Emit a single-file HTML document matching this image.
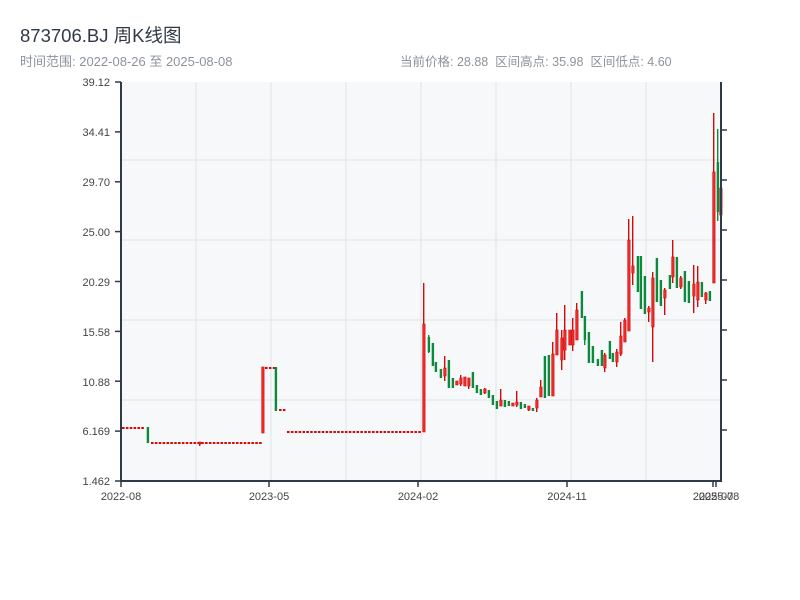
<!DOCTYPE html>
<html><head><meta charset="utf-8"><style>
body{margin:0;background:#fff;width:800px;height:600px;overflow:hidden;font-family:"Liberation Sans","Noto Sans CJK SC",sans-serif}
.t{position:absolute;left:20px;top:22px;font-size:18.5px;color:#2f3a48}
.s{position:absolute;top:51px;font-size:12.5px;color:#8c939b}
</style></head><body>
<div class="t">873706.BJ 周K线图</div>
<div class="s" style="left:20px;font-size:13px">时间范围: 2022-08-26 至 2025-08-08</div>
<div class="s" style="left:400px">当前价格: 28.88&nbsp;&nbsp;区间高点: 35.98&nbsp;&nbsp;区间低点: 4.60</div>
<svg id="c" width="800" height="600" style="position:absolute;left:0;top:0" font-family="Liberation Sans, sans-serif" font-size="11" fill="#444">
<rect x="121" y="82" width="600" height="399" fill="#f6f8fa"/>
<g stroke="#e0e3e8" stroke-width="1">
<line x1="196" y1="82" x2="196" y2="481"/><line x1="271" y1="82" x2="271" y2="481"/><line x1="346" y1="82" x2="346" y2="481"/><line x1="421" y1="82" x2="421" y2="481"/><line x1="496" y1="82" x2="496" y2="481"/><line x1="571" y1="82" x2="571" y2="481"/><line x1="646" y1="82" x2="646" y2="481"/>
<line x1="121" y1="160" x2="721" y2="160"/><line x1="121" y1="240" x2="721" y2="240"/><line x1="121" y1="320" x2="721" y2="320"/><line x1="121" y1="400" x2="721" y2="400"/>
</g>
<g id="k"></g>
<g stroke="#2f3a48" stroke-width="2" fill="none">
<line x1="121" y1="82" x2="121" y2="482"/><line x1="120" y1="481" x2="721" y2="481"/><line x1="721" y1="82" x2="721" y2="482"/>
</g>
<g stroke="#2f3a48" stroke-width="1.5">
<line x1="115" y1="82" x2="121" y2="82"/><line x1="115" y1="131.9" x2="121" y2="131.9"/><line x1="115" y1="181.8" x2="121" y2="181.8"/><line x1="115" y1="231.6" x2="121" y2="231.6"/><line x1="115" y1="281.5" x2="121" y2="281.5"/><line x1="115" y1="331.4" x2="121" y2="331.4"/><line x1="115" y1="381.2" x2="121" y2="381.2"/><line x1="115" y1="431.1" x2="121" y2="431.1"/><line x1="115" y1="481" x2="121" y2="481"/>
<line x1="721" y1="130" x2="727" y2="130"/><line x1="721" y1="180" x2="727" y2="180"/><line x1="721" y1="230" x2="727" y2="230"/><line x1="721" y1="280" x2="727" y2="280"/><line x1="721" y1="330" x2="727" y2="330"/><line x1="721" y1="380" x2="727" y2="380"/><line x1="721" y1="430" x2="727" y2="430"/>
<line x1="121" y1="481" x2="121" y2="487"/><line x1="269" y1="481" x2="269" y2="487"/><line x1="418" y1="481" x2="418" y2="487"/><line x1="567" y1="481" x2="567" y2="487"/><line x1="713" y1="481" x2="713" y2="487"/><line x1="716" y1="481" x2="716" y2="487"/>
</g>
<g text-anchor="end">
<text x="110" y="86">39.12</text><text x="110" y="136">34.41</text><text x="110" y="186">29.70</text><text x="110" y="236">25.00</text><text x="110" y="286">20.29</text><text x="110" y="336">15.58</text><text x="110" y="386">10.88</text><text x="110" y="435">6.169</text><text x="110" y="485">1.462</text>
</g>
<g text-anchor="middle">
<text x="121" y="500">2022-08</text><text x="269" y="500">2023-05</text><text x="418" y="500">2024-02</text><text x="567" y="500">2024-11</text><text x="713" y="500">2025-07</text><text x="719" y="500">2025-08</text>
</g>
</svg>
<script>
var R="#d40a0a",RF="#ee2b2b",G="#0a8a3a";
var d=[],f=[];
function flat(a,b,y){for(var x=a;x<=b;x+=3.86)f.push([x,y]);}
flat(122,145,427);flat(151,260,442);flat(265,274,367);flat(279,286,409);flat(287,420,431);
d.push([147,'g',427,443,427,443],[199,'r',442,446,442,444],[262,'r',367,433,367,433],[275,'g',367,411,367,411]);
var c=[[423,'r',283,432,324,432],[428,'g',335,353,337,352],[432,'g',343,366,343,366],[435,'g',362,372,362,372],[440,'g',369,378,369,378],[444,'r',356,381,368,376],[448,'g',360,388,360,388],[452,'g',378,388,378,388],[456,'r',381,385,381,385],[460,'r',375,386,378,384],[464,'r',377,386,377,386],[468,'r',378,389,378,386],[472,'g',372,388,372,388],[476,'g',385,393,385,393],[480,'g',389,395,389,395],[484,'r',388,394,389,393],[488,'g',390,398,390,398],[492,'g',395,405,395,405],[496,'g',401,409,401,409],[500,'r',389,406,400,406],[504,'g',400,407,400,407],[508,'g',401,406,401,406],[512,'r',403,406,403,406],[516,'r',391,407,402,405],[520,'g',402,409,402,409],[524,'g',404,408,404,408],[528,'r',406,411,406,410],[532,'g',408,411,408,411],[536,'r',398,412,400,408],[540,'r',380,397,387,397],[544,'g',356,398,356,398],[548,'g',355,396,355,396],[552,'r',342,396,354,396],[556,'r',313,355,330,355],[561,'r',330,370,338,360],[564,'r',305,360,330,350],[569,'r',330,345,330,345],[572,'r',318,351,330,345],[576,'r',303,340,310,340],[581,'g',291,318,291,318],[584,'g',316,345,316,340],[588,'g',332,363,332,363],[592,'g',346,363,346,363],[597,'g',359,366,359,366],[601,'g',350,366,350,366],[604,'r',353,372,355,368],[609,'g',341,359,341,359],[612,'g',353,362,353,362],[616,'r',349,367,352,362],[620,'r',322,356,336,354],[624,'r',318,342,320,342],[628,'r',219,331,240,331],[632,'r',216,285,266,273],[637,'g',256,292,256,292],[640,'g',256,309,256,309],[644,'g',276,314,276,314],[648,'r',306,322,308,312],[652,'r',272,362,278,327],[656,'g',258,302,258,302],[660,'g',280,306,280,306],[664,'r',288,315,290,298],[669,'g',275,289,275,289],[672,'r',240,283,257,277],[676,'g',257,288,257,288],[680,'r',276,289,278,287],[684,'g',271,302,271,302],[688,'g',281,303,281,303],[693,'r',265,313,284,296],[697,'r',266,307,282,300],[701,'g',282,297,282,297],[705,'r',292,304,293,300],[709,'g',291,301,291,301],[713,'r',113,283,172,283],[717,'g',129,221,162,212],[720,'r',164,235,188,215]];
d=d.concat(c);
var s='';
f.forEach(function(e){s+='<rect x="'+e[0]+'" y="'+e[1]+'" width="2.6" height="2" fill="'+R+'"/>';});
d.forEach(function(e){var x=e[0],col=e[1]=='r'?R:G;
s+='<line x1="'+(x+0.7)+'" y1="'+e[2]+'" x2="'+(x+0.7)+'" y2="'+e[3]+'" stroke="'+col+'" stroke-width="1.4"/>';
var h=Math.max(e[5]-e[4],1.5);
if(e[1]=='r')s+='<rect x="'+(x-0.3)+'" y="'+e[4]+'" width="2.4" height="'+h+'" fill="'+RF+'" stroke="'+R+'" stroke-width="0.6"/>';
else s+='<rect x="'+(x-0.3)+'" y="'+e[4]+'" width="2.4" height="'+h+'" fill="'+G+'"/>';});
document.getElementById('k').innerHTML=s;
</script>
</body></html>
